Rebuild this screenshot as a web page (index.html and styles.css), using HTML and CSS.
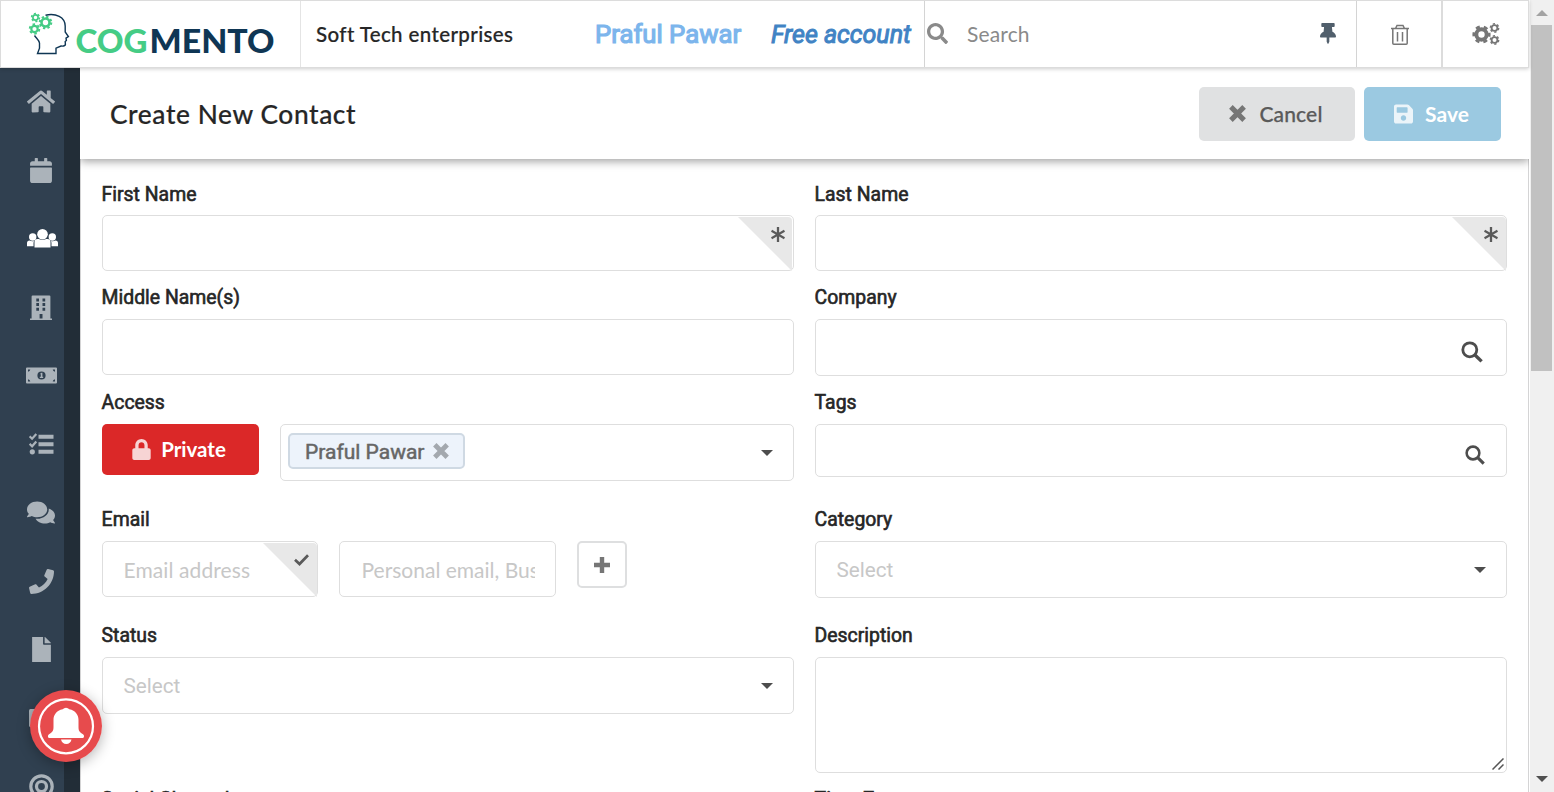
FILE: index.html
```html
<!DOCTYPE html>
<html lang="en">
<head>
<meta charset="utf-8">
<title>Create New Contact</title>
<link rel="stylesheet" href="styles.css">
</head>
<body>
<svg class="defs" width="0" height="0">
  <symbol id="search" viewBox="0 0 512 512"><path d="M505 442.7L405.3 343c-4.5-4.5-10.6-7-17-7H372c27.6-35.3 44-79.7 44-128C416 93.1 322.9 0 208 0S0 93.1 0 208s93.1 208 208 208c48.3 0 92.7-16.4 128-44v16.3c0 6.4 2.5 12.5 7 17l99.7 99.7c9.4 9.4 24.6 9.4 33.9 0l28.3-28.3c9.4-9.4 9.4-24.6.1-34zM208 336c-70.7 0-128-57.2-128-128 0-70.7 57.2-128 128-128 70.7 0 128 57.2 128 128 0 70.7-57.2 128-128 128z"/></symbol>
  <symbol id="find" viewBox="0 0 22 22"><circle cx="8.8" cy="8.8" r="7" fill="none" stroke="currentColor" stroke-width="2.8"/><path d="M14 14l6.6 6.4" stroke="currentColor" stroke-width="3.4"/></symbol>
  <symbol id="times" viewBox="0 0 16 16"><path d="M1.800 1.800l12.400 12.400M14.200 1.800L1.800 14.200" stroke="currentColor" stroke-width="4.800"/></symbol>
  <symbol id="star" viewBox="0 0 14 15"><path d="M7 0v15M.5 3.8l13 7.4M13.500 3.8l-13 7.400" stroke="currentColor" stroke-width="2.300"/></symbol>
</svg>
<div class="app">
  <div class="main">
    <header class="topbar">
      <div class="brand">
        <svg width="248" height="52" viewBox="0 -4 248 52">
          <g fill="none" stroke="#45cc85">
            <circle cx="7.500" cy="5.500" r="2.600" stroke-width="1.700"/><circle cx="7.500" cy="5.500" r="3.900" stroke-width="1.600" stroke-dasharray="2.040 2.040"/>
            <circle cx="17.500" cy="10.500" r="4" stroke-width="2.600"/><circle cx="17.500" cy="10.500" r="5.700" stroke-width="2.200" stroke-dasharray="2.240 2.240"/>
            <circle cx="6.500" cy="17" r="3.200" stroke-width="2.200"/><circle cx="6.500" cy="17" r="4.800" stroke-width="1.900" stroke-dasharray="2.510 2.510"/>
          </g>
          <path d="M17.500 3.200C28 1 37 5 37.200 14v6l3.200 4.600-2.400 1.500.4 2.400-1.200 1 .2 3c-.4 1.800-2 1.800-4.400 1.500L28 36.200v5.300H9.500l2-5.300V31C11 28 8.500 26.500 6.500 23.500" fill="none" stroke="#0f3654" stroke-width="1.400"/>
          <text class="cog" x="47.500" y="40.800" textLength="72" lengthAdjust="spacingAndGlyphs">COG</text>
          <text class="mento" x="121.500" y="40.800" textLength="125" lengthAdjust="spacingAndGlyphs">MENTO</text>
        </svg>
      </div>
      <div class="company">Soft Tech enterprises</div>
      <div class="account"><span class="user">Praful Pawar</span><span class="plan">Free account</span></div>
      <div class="search">
        <svg width="21" height="21"><use href="#search"/></svg>
        <span>Search</span>
        <svg class="pin" width="16" height="21" viewBox="0 0 384 512" preserveAspectRatio="none"><path d="M298 214L286 96h42c13 0 24-11 24-24V24c0-13-11-24-24-24H56C43 0 32 11 32 24v48c0 13 11 24 24 24h42L86 214C37 237 0 277 0 328c0 13 11 24 24 24h136v104l25 52c3 6 11 6 14 0l25-52V352h136c13 0 24-11 24-24 0-51-38-91-86-114z"/></svg>
      </div>
      <div class="tool">
        <svg class="line" width="18" height="22" viewBox="0 0 18 22"><path d="M0 4.500h18M4.500 4.500L6 1.500h6l1.500 3M1.800 4.500v14.800q0 1 1 1h12.400q1 0 1-1V4.500M6.500 8v9.500M11.500 8v9.500"/></svg>
      </div>
      <div class="tool last">
        <svg class="line" width="28" height="22" viewBox="0 0 28 22">
          <circle cx="9.500" cy="11.500" r="5.200" stroke-width="4"/><circle cx="9.500" cy="11.500" r="7.800" stroke-width="2.600" stroke-dasharray="4.100 4.068" stroke-dashoffset="2"/>
          <circle cx="22.500" cy="5" r="2.900" stroke-width="1.800"/><circle cx="22.500" cy="5" r="4.200" stroke-width="1.400" stroke-dasharray="2.200 2.200"/>
          <circle cx="22.500" cy="17" r="2.900" stroke-width="1.800"/><circle cx="22.500" cy="17" r="4.200" stroke-width="1.400" stroke-dasharray="2.200 2.200"/>
        </svg>
      </div>
    </header>
    <div class="body">
      <nav class="sidebar">
        <div class="nav"><svg width="28" height="25" viewBox="0 0 576 512"><path d="M280.370 148.260L96 300.110V464a16 16 0 0 0 16 16l112.060-.29a16 16 0 0 0 15.920-16V368a16 16 0 0 1 16-16h64a16 16 0 0 1 16 16v95.640a16 16 0 0 0 16 16.050L464 480a16 16 0 0 0 16-16V300L295.670 148.260a12.190 12.190 0 0 0-15.300 0zM571.600 251.470L488 182.560V44.050a12 12 0 0 0-12-12h-56a12 12 0 0 0-12 12v72.610L318.470 43a48 48 0 0 0-61 0L4.340 251.470a12 12 0 0 0-1.600 16.900l25.500 31A12 12 0 0 0 45.150 301l235.220-193.740a12.190 12.190 0 0 1 15.300 0L530.900 301a12 12 0 0 0 16.900-1.600l25.500-31a12 12 0 0 0-1.700-16.930z"/></svg></div>
        <div class="nav"><svg width="22" height="25" viewBox="0 0 448 512"><path d="M12 192h424c6.600 0 12 5.400 12 12v260c0 26.500-21.500 48-48 48H48c-26.500 0-48-21.500-48-48V204c0-6.600 5.400-12 12-12zm436-44v-36c0-26.500-21.500-48-48-48h-48V12c0-6.600-5.400-12-12-12h-40c-6.600 0-12 5.400-12 12v52H160V12c0-6.600-5.400-12-12-12h-40c-6.600 0-12 5.400-12 12v52H48C21.500 64 0 85.500 0 112v36c0 6.600 5.400 12 12 12h424c6.600 0 12-5.400 12-12z"/></svg></div>
        <div class="nav active"><svg width="31" height="19" viewBox="0 0 31 19"><circle cx="15.500" cy="5.300" r="5.300"/><circle cx="5.700" cy="8" r="3.700"/><circle cx="25.300" cy="8" r="3.700"/><path d="M7.500 18.500V13q0-3 3-3h1.300q3.700 2.200 7.400 0h1.300q3 0 3 3v5.500zM0 17.200V14q0-2.500 2.600-2.500 2 1 4.600.4-.7 1-.7 2.300v3zM31 17.200V14q0-2.500-2.600-2.500-2 1-4.600.4.7 1 .7 2.300v3z"/></svg></div>
        <div class="nav"><svg width="22" height="25" viewBox="0 0 22 25"><path fill-rule="evenodd" d="M1.600 1.500Q1.600.5 2.600.5h16.800q1 0 1 1v22H22V25H0v-1.500h1.600zM6.300 3.500v3H9v-3zm6.200 0v3h2.700v-3zM6.300 8v3H9V8zm6.200 0v3h2.700V8zm-6.200 4.700v3H9v-3zm6.200 0v3h2.700v-3zM9.600 19v4.500h2.900V19z"/></svg></div>
        <div class="nav"><svg width="31" height="17" viewBox="0 0 31 17"><path fill-rule="evenodd" d="M1 .5h29q1 0 1 1v14q0 1-1 1H1q-1 0-1-1v-14q0-1 1-1zM2 2.500v2.300Q4 4.600 4.300 2.500zm24.700 0Q27 4.600 29 4.800V2.500zM2 12.200v2.300h2.300Q4 12.400 2 12.200zm27 0q-2 .2-2.300 2.300H29zM15.500 4.400a4.100 4.100 0 1 0 0 8.200 4.100 4.100 0 0 0 0-8.200zm-1.200 2.100l1.200-.8h.9v4.100h.8v1.200h-3.400V9.800h1V7.200h-.5z"/></svg></div>
        <div class="nav"><svg width="25" height="22" viewBox="0 0 25 22"><path d="M9.500 1.800h15v4h-15zM9.500 9.300h15v4h-15zM9.500 16.800h15v4h-15z"/><circle cx="3.300" cy="18.800" r="2.600"/><path d="M.6 3.300l2.500 2.400L7.300 1M.6 10.900l2.500 2.400 4.200-4.700" fill="none" stroke="#abb3ba" stroke-width="2.200"/></svg></div>
        <div class="nav"><svg width="28" height="25" viewBox="0 0 576 512"><path d="M416 192c0-88.400-93.100-160-208-160S0 103.600 0 192c0 34.300 14.100 65.900 38 92-13.400 30.200-35.500 54.200-35.800 54.500-2.200 2.300-2.800 5.700-1.500 8.700S4.800 352 8 352c36.600 0 66.900-12.300 88.700-25 32.200 15.700 70.300 25 111.300 25 114.900 0 208-71.600 208-160zm122 220c23.900-26 38-57.700 38-92 0-66.900-53.500-124.200-129.300-148.100.9 6.600 1.300 13.300 1.300 20.100 0 105.900-107.700 192-240 192-10.800 0-21.300-.8-31.700-1.900C207.800 439.600 281.800 480 368 480c41 0 79.100-9.200 111.300-25 21.800 12.700 52.100 25 88.700 25 3.200 0 6.100-1.900 7.300-4.800 1.300-2.900.7-6.300-1.500-8.700-.3-.3-22.400-24.200-35.800-54.500z"/></svg></div>
        <div class="nav"><svg width="25" height="25" viewBox="0 0 512 512"><path d="M493.400 24.600l-104-24c-11.300-2.600-22.900 3.300-27.500 13.900l-48 112c-4.200 9.800-1.400 21.300 6.900 28l60.600 49.600c-36 76.700-98.900 140.500-177.200 177.200l-49.600-60.600c-6.800-8.300-18.200-11.100-28-6.900l-112 48C3.900 366.500-2 378.100.6 389.400l24 104C27.100 504.200 36.700 512 48 512c256.100 0 464-207.500 464-464 0-11.200-7.700-20.900-18.600-23.400z"/></svg></div>
        <div class="nav"><svg width="19" height="25" viewBox="0 0 384 512"><path d="M224 136V0H0v512h384V160H248c-13.200 0-24-10.800-24-24zm160-8H256V0h8l120 120z"/></svg></div>
        <div class="nav"><svg width="25" height="18" viewBox="0 0 25 18"><rect width="25" height="18" rx="1.500"/></svg></div>
        <div class="nav"><svg class="ring" width="25" height="25" viewBox="0 0 25 25"><circle cx="12.500" cy="12.500" r="10.700"/><circle cx="12.500" cy="12.500" r="5"/></svg></div>
      </nav>
      <main class="page">
        <div class="titlebar">
          <h1>Create New Contact</h1>
          <button class="btn cancel"><svg width="17" height="17"><use href="#times"/></svg>Cancel</button>
          <button class="btn save"><svg width="19" height="22" viewBox="0 0 448 512"><path d="M434 130l-84-84A48 48 0 0 0 316 32H48C21.500 32 0 53.500 0 80v352c0 26.500 21.500 48 48 48h352c26.500 0 48-21.500 48-48V164a48 48 0 0 0-14-34zM224 416c-35 0-64-29-64-64s29-64 64-64 64 29 64 64-29 64-64 64zm96-304v100c0 7-5 12-12 12H76c-7 0-12-5-12-12V108c0-7 5-12 12-12h228l12 4 4 12z"/></svg>Save</button>
        </div>
        <form class="form">
          <div class="field first"><label>First Name</label><div class="box"><div class="corner near"><svg width="14" height="15"><use href="#star"/></svg></div></div></div>
          <div class="field first"><label>Last Name</label><div class="box"><div class="corner"><svg width="14" height="15"><use href="#star"/></svg></div></div></div>
          <div class="field"><label>Middle Name(s)</label><div class="box"></div></div>
          <div class="field"><label>Company</label><div class="box tall end company-find"><svg width="22" height="22"><use href="#find"/></svg></div></div>
          <div class="field"><label>Access</label>
            <div class="row">
              <button type="button" class="private"><svg width="19" height="21" viewBox="0 0 448 512"><path d="M400 224h-24v-72C376 68.200 307.800 0 224 0S72 68.200 72 152v72H48c-26.500 0-48 21.500-48 48v192c0 26.500 21.500 48 48 48h352c26.500 0 48-21.500 48-48V272c0-26.500-21.500-48-48-48zm-104 0H152v-72c0-39.700 32.300-72 72-72s72 32.300 72 72v72z"/></svg>Private</button>
              <div class="box tall tagbox"><span class="tag">Praful Pawar<svg width="16" height="16"><use href="#times"/></svg></span><i class="caret"></i></div>
            </div>
          </div>
          <div class="field"><label>Tags</label><div class="box short end tags-find"><svg width="20" height="20"><use href="#find"/></svg></div></div>
          <div class="field"><label>Email</label>
            <div class="row">
              <div class="box mail"><span>Email address</span><div class="corner"><svg width="15" height="12" viewBox="0 0 15 12"><path d="M1 5.800l4.500 4.200L14 1.200" fill="none" stroke="currentColor" stroke-width="2.700"/></svg></div></div>
              <div class="box kind"><span>Personal email, Business</span></div>
              <button type="button" class="add"><svg width="16" height="16" viewBox="0 0 16 16"><path d="M8 0v16M0 8h16" stroke="#767676" stroke-width="4.400"/></svg></button>
            </div>
          </div>
          <div class="field"><label>Category</label><div class="box tall select"><span>Select</span><i class="caret"></i></div></div>
          <div class="field"><label>Status</label><div class="box tall select"><span>Select</span><i class="caret"></i></div></div>
          <div class="field"><label>Description</label><div class="box area"><svg width="12" height="12" viewBox="0 0 12 12"><path d="M.5 11.500l11-11M6.500 11.500l5-5" stroke="#555" stroke-width="1.500"/></svg></div></div>
          <div class="field"><label>Social Channels</label></div>
          <div class="field"><label>Time Zone</label></div>
        </form>
      </main>
    </div>
  </div>
  <div class="scroll"><i class="up"></i><div class="thumb"></div><i class="down"></i></div>
</div>
<div class="bell">
  <svg width="72" height="72" viewBox="0 0 72 72"><circle cx="36" cy="36" r="36" fill="#e74b4d"/><circle cx="36" cy="36.300" r="27" fill="none" stroke="#fff" stroke-width="2.200"/><path fill="#fff" d="M36 17.800q2 0 3.300 1.500C45.500 20.500 48.500 25 48.500 30v7c0 4 1 5 4.500 7.200 1.400.9 1.500 3.800-.5 3.800h-33c-2 0-1.900-2.900-.5-3.800 3.500-2.200 4.500-3.200 4.500-7.200v-7c0-5 3-9.500 9.200-10.700Q34 17.800 36 17.800zM31 49.600h10.500q-1 4.400-5.200 4.400T31 49.600z"/></svg>
</div>
</body>
</html>
```
FILE: styles.css
```css
* { box-sizing: border-box; }
body { margin: 0; height: 792px; overflow: hidden; background: #fff; color: #262626; font-family: Lato, sans-serif; font-size: 21px; }
svg { display: block; flex: none; fill: currentColor; }
.defs { position: absolute; }
button { border: 0; padding: 0; font: inherit; }
.app { display: flex; height: 792px; }
.main { width: 1530px; flex: none; display: flex; flex-direction: column; }

.topbar { height: 68px; width: 1529px; flex: none; display: flex; border: 1px solid #dcdcdc; background: #fff; position: relative; z-index: 3; box-shadow: 0 1px 4px rgba(0,0,0,.2); }
.topbar > div { display: flex; align-items: center; }
.brand { width: 300px; border-right: 1px solid #e4e4e4; padding: 0 0 0 27px; }
.brand svg { overflow: visible; }
.cog, .mento { font: 900 32px Lato, sans-serif; }
.cog { fill: #45cc85; }
.mento { fill: #0f3654; }
.company { width: 294px; padding-left: 15px; font-size: 20.500px; letter-spacing: .38px; font-weight: 500; -webkit-text-stroke: .2px #262626; }
.account { width: 330px; border-right: 1px solid #d4d4d4; font-family: Roboto, sans-serif; font-size: 25.700px; }
.user { width: 176px; color: #7cb5ec; -webkit-text-stroke: 1.200px #7cb5ec; }
.plan { font-size: 25px; font-style: italic; color: #4183c4; -webkit-text-stroke: 1px #4183c4; }
.search { width: 432px; border-right: 1px solid #d4d4d4; color: #8a8a8a; padding: 0 20px 0 2px; gap: 19px; }
.search span { margin-top: -2px; letter-spacing: .15px; }
.search svg { margin-top: -2px; }
.search .pin { margin-left: auto; color: #515f6c; }
.tool { width: 86px; justify-content: center; border-right: 2px solid #dcdcdc; padding: 2px 0 0 2px; }
.tool.last { flex: 1; border-right: 0; padding: 0; }
.line { fill: none; stroke: #767676; stroke-width: 1.500px; }
.ring { fill: none; stroke: #abb3ba; stroke-width: 3.200px; }

.body { flex: 1; display: flex; min-height: 0; }
.sidebar { width: 80px; flex: none; background: #304050; border-right: 16px solid #222d37; color: #abb3ba; }
.nav { height: 68.500px; display: flex; align-items: center; justify-content: center; padding: 0 0 1px 18.500px; }
.active { color: #fff; padding-left: 20.500px; }
.page { flex: 1; display: flex; flex-direction: column; border-right: 1px solid #fff; overflow: hidden; }
.titlebar { height: 91px; flex: none; display: flex; align-items: center; padding: 0 28px 0 30px; background: #fff; position: relative; z-index: 2; box-shadow: 0 2px 9px rgba(0,0,0,.4); }
h1 { margin: 0 auto 0 0; font-size: 26.300px; letter-spacing: .6px; font-weight: 500; line-height: 30px; -webkit-text-stroke: .2px #262626; }
.btn { height: 54px; border-radius: 5px; display: flex; align-items: center; justify-content: center; font-size: 21px; padding-right: 2px; }
.cancel { width: 156px; background: #e0e1e2; color: #5a5a5a; gap: 13px; margin-right: 9px; font-weight: 500; letter-spacing: .15px; -webkit-text-stroke: .25px #5a5a5a; }
.cancel svg { color: #767676; }
.save { width: 137px; background: #9bc9e1; color: #fff; gap: 12px; font-weight: 700; }
.save svg { opacity: .8; }

.form { flex: 1; border-left: 1px solid #d4d4d5; border-right: 1px solid #d4d4d5; padding: 22px 21px 0; display: grid; grid-template-columns: 692px 692px; column-gap: 21px; grid-template-rows: 104px 105px 117px 116px 164px 40px; }
label { display: block; height: 34px; font: 400 19.400px/25px Roboto, sans-serif; margin-left: -.4px; -webkit-text-stroke: .6px #262626; }
.first label { padding-top: 1px; }
.box { height: 56px; border: 1px solid #dedede; border-radius: 5px; background: #fff; position: relative; display: flex; align-items: center; color: #c7c7c7; }
.tall { height: 57px; }
.short { height: 53px; }
.area { height: 116px; align-items: flex-end; justify-content: flex-end; padding: 2px; }
.end { justify-content: flex-end; color: #4d4d4d; }
.company-find { padding: 9px 23px 0 0; }
.tags-find { padding: 8px 21px 0 0; }
.corner { position: absolute; top: 1px; right: 0; width: 54px; height: 54px; background: #e8e8e8; clip-path: polygon(0 0, 100% 0, 100% 100%); padding: 10px 8.500px 0 0; display: flex; justify-content: flex-end; align-items: flex-start; color: #5a5a5a; border-radius: 0 4px 0 0; }
.near { right: 1px; padding-right: 7.500px; }
.row { display: flex; align-items: flex-start; }
.private { width: 157px; height: 51px; border-radius: 5px; background: #db2828; color: #fff; font-weight: 700; font-size: 20.500px; display: flex; align-items: center; justify-content: center; gap: 10px; margin-right: 21px; padding: 0 3px 2px 0; }
.private svg { opacity: .8; margin-top: 2px; }
.tagbox { flex: 1; padding: 0 20px 4px 7px; justify-content: space-between; }
.tag { height: 36px; width: 177px; border: 2px solid #cfd9e3; border-radius: 5px; background: #edf3fb; color: #666; display: flex; align-items: center; padding: 2px 0 0 15px; gap: 9px; font: 400 21px Roboto, sans-serif; -webkit-text-stroke: .5px #666; }
.tag svg { color: #a3a8ae; margin-top: -1px; }
.caret { border: 6px solid transparent; border-top-color: #4d4d4d; border-bottom: 0; }
.tagbox .caret { margin-top: 4px; }
.select { padding: 0 20px 0 20.500px; justify-content: space-between; font-family: Roboto, sans-serif; font-size: 20.700px; }
.mail { width: 216px; margin-right: 21px; padding: 0 0 0 20.500px; letter-spacing: .1px; }
.mail .corner { padding: 11px 8px 0 0; }
.kind { width: 217px; margin-right: 21px; padding: 0 20px 0 21.500px; }
.kind span { overflow: hidden; white-space: nowrap; }
.add { width: 50px; height: 47px; border: 2px solid #dedfe0; border-radius: 5px; background: #fff; display: flex; align-items: center; justify-content: center; }

.scroll { width: 24px; background: #f0f0f0; display: flex; flex-direction: column; align-items: center; padding: 10px 1px 10px 0; }
.up { border: 6px solid transparent; border-bottom-color: #a3a3a3; border-top: 0; }
.thumb { width: 21px; height: 346px; margin-top: 9px; background: #c1c1c1; }
.down { margin-top: auto; border: 6px solid transparent; border-top-color: #505050; border-bottom: 0; }
.bell { position: absolute; left: 30px; top: 690px; z-index: 5; border-radius: 50%; box-shadow: 0 3px 14px rgba(0,0,0,.3); }
```
